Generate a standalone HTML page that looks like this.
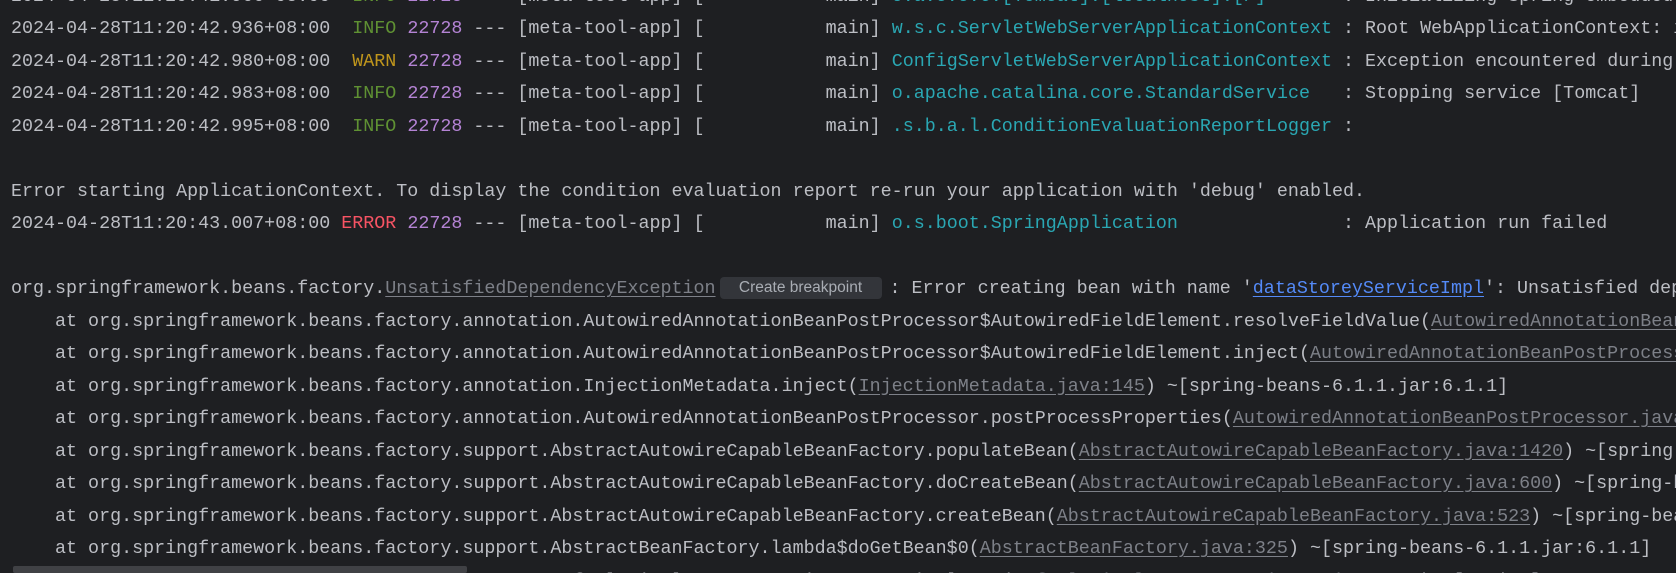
<!DOCTYPE html>
<html><head><meta charset="utf-8"><style>
html,body{margin:0;padding:0;background:#1e1f22;width:1676px;height:573px;overflow:hidden}
#c{position:relative;width:1676px;height:573px;overflow:hidden;background:#1e1f22}
pre{position:absolute;left:11px;top:-19.5px;margin:0;font-family:"Liberation Mono",monospace;font-size:18.35px;line-height:32.5px;color:#bcbec4;white-space:pre}
.i{color:#5f9133}.w{color:#c0961c}.e{color:#f75464}.p{color:#b483d4}.l{color:#2aa7b3}
.u{color:#7d8088;text-decoration:underline;text-underline-offset:3px}
.b{color:#548af7;text-decoration:underline;text-underline-offset:3px}
.bp{display:inline-block;width:162px;margin:0 8px 0 4px;background:#33353a;color:#a9adb4;font-family:"Liberation Sans",sans-serif;font-size:15.5px;line-height:22px;border-radius:4px;text-align:center;vertical-align:1px}
.sb{position:absolute;left:13px;top:566px;width:454px;height:7px;background:#404145;border-radius:2px}
</style></head><body><div id="c">
<pre>2024-04-28T11:20:41.966+08:00  <span class="i">INFO</span> <span class="p">22728</span> --- [meta-tool-app] [           main] <span class="l">o.a.c.c.C.[Tomcat].[localhost].[/]      </span> : Initializing Spring embedded WebApplicationContext
2024-04-28T11:20:42.936+08:00  <span class="i">INFO</span> <span class="p">22728</span> --- [meta-tool-app] [           main] <span class="l">w.s.c.ServletWebServerApplicationContext</span> : Root WebApplicationContext: initialization completed
2024-04-28T11:20:42.980+08:00  <span class="w">WARN</span> <span class="p">22728</span> --- [meta-tool-app] [           main] <span class="l">ConfigServletWebServerApplicationContext</span> : Exception encountered during context initialization
2024-04-28T11:20:42.983+08:00  <span class="i">INFO</span> <span class="p">22728</span> --- [meta-tool-app] [           main] <span class="l">o.apache.catalina.core.StandardService  </span> : Stopping service [Tomcat]
2024-04-28T11:20:42.995+08:00  <span class="i">INFO</span> <span class="p">22728</span> --- [meta-tool-app] [           main] <span class="l">.s.b.a.l.ConditionEvaluationReportLogger</span> :

Error starting ApplicationContext. To display the condition evaluation report re-run your application with 'debug' enabled.
2024-04-28T11:20:43.007+08:00 <span class="e">ERROR</span> <span class="p">22728</span> --- [meta-tool-app] [           main] <span class="l">o.s.boot.SpringApplication              </span> : Application run failed

org.springframework.beans.factory.<span class="u">UnsatisfiedDependencyException</span><span class="bp">Create breakpoint</span>: Error creating bean with name '<span class="b">dataStoreyServiceImpl</span>': Unsatisfied dependency
    at org.springframework.beans.factory.annotation.AutowiredAnnotationBeanPostProcessor$AutowiredFieldElement.resolveFieldValue(<span class="u">AutowiredAnnotationBeanPostProcessor.java:787</span>)
    at org.springframework.beans.factory.annotation.AutowiredAnnotationBeanPostProcessor$AutowiredFieldElement.inject(<span class="u">AutowiredAnnotationBeanPostProcessor.java:767</span>)
    at org.springframework.beans.factory.annotation.InjectionMetadata.inject(<span class="u">InjectionMetadata.java:145</span>) ~[spring-beans-6.1.1.jar:6.1.1]
    at org.springframework.beans.factory.annotation.AutowiredAnnotationBeanPostProcessor.postProcessProperties(<span class="u">AutowiredAnnotationBeanPostProcessor.java:508</span>)
    at org.springframework.beans.factory.support.AbstractAutowireCapableBeanFactory.populateBean(<span class="u">AbstractAutowireCapableBeanFactory.java:1420</span>) ~[spring-beans]
    at org.springframework.beans.factory.support.AbstractAutowireCapableBeanFactory.doCreateBean(<span class="u">AbstractAutowireCapableBeanFactory.java:600</span>) ~[spring-beans]
    at org.springframework.beans.factory.support.AbstractAutowireCapableBeanFactory.createBean(<span class="u">AbstractAutowireCapableBeanFactory.java:523</span>) ~[spring-beans]
    at org.springframework.beans.factory.support.AbstractBeanFactory.lambda$doGetBean$0(<span class="u">AbstractBeanFactory.java:325</span>) ~[spring-beans-6.1.1.jar:6.1.1]
    at org.springframework.beans.factory.support.DefaultSingletonBeanRegistry.getSingleton(<span class="u">DefaultSingletonBeanRegistry.java:234</span>) ~[spring]</pre>
<div class="sb"></div>
</div></body></html>
